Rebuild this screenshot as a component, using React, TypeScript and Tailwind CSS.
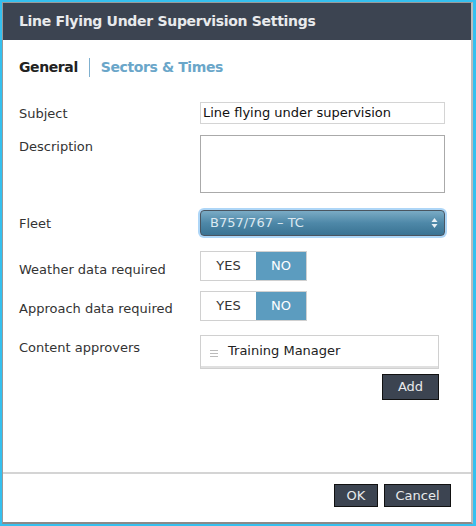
import React from "react";

const font = { fontFamily: '"DejaVu Sans", Verdana, sans-serif' };

function Row({ label, children, className = "", labelClass = "" }: { label: string; children: React.ReactNode; className?: string; labelClass?: string }) {
  return (
    <div className={`flex ${className}`}>
      <div className={`w-[181px] shrink-0 text-[13px] text-[#333] ${labelClass}`}>{label}</div>
      <div className="flex-1">{children}</div>
    </div>
  );
}

function Toggle() {
  return (
    <div className="flex h-[30px] w-[107px] border border-[#d0d0d0] text-[13px]">
      <div className="flex w-[55px] items-center justify-center bg-white text-[#333]">YES</div>
      <div className="flex flex-1 items-center justify-center bg-[#5c9cbf] text-white">NO</div>
    </div>
  );
}

export default function App() {
  return (
    <div className="h-[526px] w-[476px] bg-[#35c0ef] pb-[2px] pl-[2px] pr-[3px] pt-[2px]" style={font}>
      <div className="flex h-full flex-col border-b-2 border-l border-r-2 border-t border-b-[#8a8a8a] border-l-[#9a9a9a] border-r-[#bdbdbd] border-t-[#9a9a9a] bg-white">
        <div className="flex h-[37px] shrink-0 items-center bg-[#3c4451] pl-[16px] text-[14px] font-bold tracking-[-0.3px] text-[#e8eaec]">
          Line Flying Under Supervision Settings
        </div>
        <div className="flex flex-1 flex-col pl-[16px] pr-[28px]">
          <div className="mt-[17px] flex items-center text-[14px] font-bold tracking-[-0.4px]">
            <span className="text-[#222]">General</span>
            <span className="mx-[11px] h-[19px] w-px bg-[#7fb0cf]" />
            <span className="text-[#6aa6c9]">Sectors &amp; Times</span>
          </div>

          <Row label="Subject" className="mt-[24px]" labelClass="pt-[2px]">
            <div className="flex h-[22px] w-[245px] items-center border border-[#d4d4d4] pl-[2px] text-[13px] text-[#111]">
              Line flying under supervision
            </div>
          </Row>

          <Row label="Description" className="mt-[11px]" labelClass="pt-[2px]">
            <div className="h-[58px] w-[245px] border border-[#aaa]" />
          </Row>

          <Row label="Fleet" className="mt-[15px]" labelClass="pt-[6px]">
            <div className="-ml-[2px] w-[249px] rounded-[6px] bg-[#aed6f7] p-[2px]">
              <div className="flex h-[26px] items-center justify-between rounded-[4px] border border-[#4a5560] bg-gradient-to-b from-[#7aabc5] via-[#4e88a8] to-[#3a7393] pl-[9px] pr-[6px] text-[13px] text-[#dce9f1]">
                <span>B757/767 – TC</span>
                <svg width="7" height="12" viewBox="0 0 7 12">
                  <path d="M3.5 1 L6.5 5 L0.5 5 Z" fill="#e8f0f5" />
                  <path d="M3.5 11 L6.5 7 L0.5 7 Z" fill="#e8f0f5" />
                </svg>
              </div>
            </div>
          </Row>

          <Row label="Weather data required" className="mt-[13px]" labelClass="pt-[9px]">
            <Toggle />
          </Row>

          <Row label="Approach data required" className="mt-[10px]" labelClass="pt-[8px]">
            <Toggle />
          </Row>

          <Row label="Content approvers" className="mt-[14px]" labelClass="pt-[3px]">
            <div className="flex w-[239px] flex-col items-end">
              <div className="flex h-[34px] w-full flex-col border border-[#d0d0d0]">
                <div className="flex flex-1 items-center border-b-2 border-[#e0e0e0]">
                  <div className="ml-[9px] mr-[10px] flex flex-col gap-[2px] pt-[4px]">
                    <span className="h-px w-[8px] bg-[#bbb]" />
                    <span className="h-px w-[8px] bg-[#bbb]" />
                    <span className="h-px w-[8px] bg-[#bbb]" />
                  </div>
                  <span className="text-[13px] text-[#222]">Training Manager</span>
                </div>
              </div>
              <button className="mt-[5px] flex h-[26px] w-[57px] items-center justify-center border border-[#111] bg-[#3c4451] text-[13px] text-[#e8eaec]">
                Add
              </button>
            </div>
          </Row>
        </div>
        <div className="flex h-[50px] shrink-0 items-start justify-end gap-[6px] border-t-2 border-[#d4d4d4] pr-[20px] pt-[10px]">
          <button className="flex h-[23px] w-[44px] items-center justify-center border border-[#111] bg-[#3c4451] text-[13px] text-[#e8eaec]">
            OK
          </button>
          <button className="flex h-[23px] w-[67px] items-center justify-center border border-[#111] bg-[#3c4451] text-[13px] text-[#e8eaec]">
            Cancel
          </button>
        </div>
      </div>
    </div>
  );
}
